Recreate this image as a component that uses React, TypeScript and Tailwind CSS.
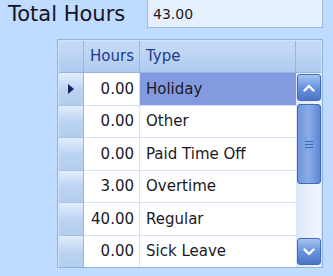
import React from 'react';

const rows = [
  { hours: '0.00', type: 'Holiday' },
  { hours: '0.00', type: 'Other' },
  { hours: '0.00', type: 'Paid Time Off' },
  { hours: '3.00', type: 'Overtime' },
  { hours: '40.00', type: 'Regular' },
  { hours: '0.00', type: 'Sick Leave' },
];

const font = { fontFamily: 'Tahoma, "DejaVu Sans", sans-serif' };

const ScrollButton: React.FC<{ up?: boolean }> = ({ up }) => (
  <div className="h-[27px] w-[24px] mx-auto rounded-[3px] border border-[#3f6bb8] bg-gradient-to-b from-[#a4c4f2] via-[#6b93dc] to-[#4a74c8] flex items-center justify-center">
    <svg width="12" height="8" viewBox="0 0 12 8">
      <path
        d={up ? 'M1.5 6.5 L6 2 L10.5 6.5' : 'M1.5 1.5 L6 6 L10.5 1.5'}
        fill="none"
        stroke="white"
        strokeWidth="2.4"
        strokeLinecap="round"
        strokeLinejoin="round"
      />
    </svg>
  </div>
);

export default function App() {
  return (
    <div
      className="w-[333px] h-[276px] bg-[#bfdbff] overflow-hidden text-[#1a1a26]"
      style={font}
    >
      {/* Top: total */}
      <div className="flex items-start h-[39px]">
        <div className="pl-[8px] pt-[1px] w-[147px] text-[21px] leading-[26px] text-[#15151f]">
          Total Hours
        </div>
        <div className="mt-[-1px] w-[176px] h-[29px] border border-[#9db8de] bg-[#e6f0fd] pl-[5px] pt-[5px] text-[14px] leading-[18px]">
          43.00
        </div>
      </div>

      {/* Grid */}
      <div className="ml-[57px] w-[266px] h-[229px] border border-[#93b2dc] bg-[#d3e3f7] p-px">
        {/* header */}
        <div className="flex h-[32px] border-b border-[#95b3dd] bg-gradient-to-b from-[#c7dbf6] to-[#aecbf0] text-[#1f3b8f] text-[15px]">
          <div className="w-[25px] border-r border-[#98b6de]" />
          <div className="w-[56px] border-r border-[#98b6de] flex items-center justify-end pr-[5px]">
            Hours
          </div>
          <div className="w-[156px] border-r border-[#98b6de] flex items-center pl-[6px]">
            Type
          </div>
          <div className="flex-1" />
        </div>

        {/* body */}
        <div className="flex h-[194px]">
          <div className="w-[237px] overflow-hidden">
            {rows.map((r, i) => (
              <div key={r.type} className="flex h-[32.5px] text-[15px]">
                <div className="w-[25px] border-r border-[#98b6de] border-b border-b-[#a6c2e8] bg-gradient-to-b from-[#e3eefc] via-[#bcd4f2] to-[#b3cdf0] flex items-center justify-center">
                  {i === 0 && (
                    <svg width="6" height="10" viewBox="0 0 6 10">
                      <path d="M0 0 L6 5 L0 10 Z" fill="#14245c" />
                    </svg>
                  )}
                </div>
                <div className="w-[56px] border-r border-[#d5e2f3] border-b border-b-[#d5e2f3] bg-white flex items-center justify-end pr-[5px]">
                  {r.hours}
                </div>
                <div
                  className={`w-[156px] border-b border-[#d5e2f3] flex items-center pl-[6px] ${
                    i === 0 ? 'bg-[#8399e0]' : 'bg-white'
                  }`}
                >
                  {r.type}
                </div>
              </div>
            ))}
          </div>

          {/* scrollbar */}
          <div className="flex-1 flex flex-col bg-gradient-to-r from-[#dbe8fa] to-[#f0f6fe] pt-[1px]">
            <ScrollButton up />
            <div className="mt-[3px] h-[80px] w-[24px] mx-auto rounded-[3px] border border-[#3f6bb8] bg-gradient-to-r from-[#6f96dc] via-[#8aabe8] to-[#5d86d2] flex flex-col items-center justify-center gap-[2px]">
              <div className="w-[8px] h-px bg-[#3f64b0]" />
              <div className="w-[8px] h-px bg-[#3f64b0]" />
              <div className="w-[8px] h-px bg-[#3f64b0]" />
            </div>
            <div className="flex-1" />
            <ScrollButton />
            <div className="h-[2px]" />
          </div>
        </div>
      </div>
    </div>
  );
}
